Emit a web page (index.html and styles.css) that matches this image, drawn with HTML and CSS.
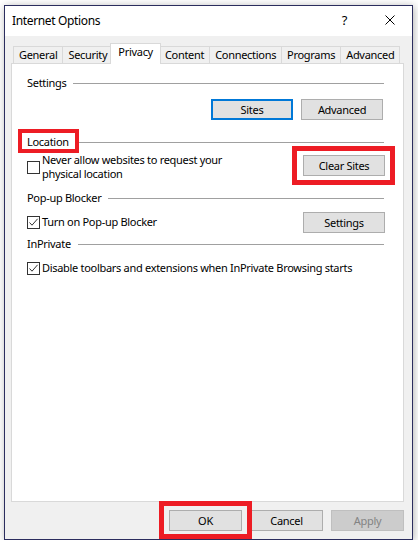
FILE: index.html
```html
<!DOCTYPE html>
<html lang="en">
<head>
<meta charset="utf-8">
<title>Internet Options</title>
<link rel="stylesheet" href="styles.css">
</head>
<body>
<div class="window">
  <header class="titlebar">
    <span class="title">Internet Options</span>
    <span class="caption-btn help">?</span>
    <span class="caption-btn close">
      <svg width="10" height="10" viewBox="0 0 10 10"><path d="M0.5 0.5L9.5 9.5M9.5 0.5L0.5 9.5" stroke="#000" stroke-width="1" fill="none"/></svg>
    </span>
  </header>

  <div class="dialog">
    <nav class="tabs">
      <span class="tab">General</span>
      <span class="tab">Security</span>
      <span class="tab active">Privacy</span>
      <span class="tab">Content</span>
      <span class="tab">Connections</span>
      <span class="tab">Programs</span>
      <span class="tab">Advanced</span>
    </nav>

    <section class="panel">
      <div class="group-head head-settings"><span>Settings</span><i class="rule"></i></div>
      <div class="btn-row">
        <button class="btn default">Sites</button>
        <button class="btn">Advanced</button>
      </div>

      <div class="group-head head-location"><span class="callout callout-label">Location</span><i class="rule"></i></div>
      <div class="option-row row-location">
        <label class="check multi">
          <span class="box"></span>
          <span class="check-text">Never allow websites to request your<br>physical location</span>
        </label>
        <button class="btn callout callout-btn">Clear Sites</button>
      </div>

      <div class="group-head head-popup"><span>Pop-up Blocker</span><i class="rule"></i></div>
      <div class="option-row row-popup">
        <label class="check single">
          <span class="box checked">
            <svg width="11" height="11" viewBox="0 0 11 11"><path d="M1.5 5.5L4 8.2L9.6 1.8" stroke="#333" stroke-width="1" fill="none"/></svg>
          </span>
          <span class="check-text">Turn on Pop-up Blocker</span>
        </label>
        <button class="btn">Settings</button>
      </div>

      <div class="group-head head-inprivate"><span>InPrivate</span><i class="rule"></i></div>
      <div class="option-row row-inprivate">
        <label class="check single">
          <span class="box checked">
            <svg width="11" height="11" viewBox="0 0 11 11"><path d="M1.5 5.5L4 8.2L9.6 1.8" stroke="#333" stroke-width="1" fill="none"/></svg>
          </span>
          <span class="check-text">Disable toolbars and extensions when InPrivate Browsing starts</span>
        </label>
      </div>
    </section>

    <footer class="actions">
      <button class="btn wide callout callout-ok">OK</button>
      <button class="btn wide">Cancel</button>
      <button class="btn wide" disabled>Apply</button>
    </footer>
  </div>
</div>
</body>
</html>
```

FILE: styles.css
```css
* {
  box-sizing: border-box;
}

html, body {
  margin: 0;
  background: #ffffff;
}

body {
  padding: 5px 0 0 4px;
  font-family: "Noto Sans", "Open Sans", sans-serif;
  font-size: 11px;
  letter-spacing: -0.3px;
  color: #000;
}

/* dialog frame */
.window {
  width: 409px;
  height: 535px;
  border: 1px solid #2b2d5e;
  display: flex;
  flex-direction: column;
  background: #f0f0f0;
  box-shadow: 1px 1px 8px rgba(0, 0, 0, 0.3);
}

.titlebar {
  height: 30px;
  flex: none;
  display: flex;
  align-items: center;
  background: #ffffff;
}

.title {
  flex: 1;
  padding-left: 7px;
  font-size: 12px;
  letter-spacing: -0.35px;
  line-height: 30px;
}

.caption-btn {
  width: 45px;
  height: 30px;
  display: flex;
  align-items: center;
  justify-content: center;
  padding-bottom: 2px;
}

.help {
  font-size: 13px;
  letter-spacing: 0;
}

.close svg {
  display: block;
}

.dialog {
  flex: 1;
  display: flex;
  flex-direction: column;
  padding: 7px 8px 8px 6px;
}

/* tab strip */
.tabs {
  height: 20px;
  flex: none;
  display: flex;
  align-items: flex-end;
  padding-left: 2px;
}

.tab {
  height: 17px;
  line-height: 15px;
  padding: 0 5px;
  border: 1px solid #d9d9d9;
  border-bottom: none;
  background: #f0f0f0;
  margin-left: -1px;
  white-space: nowrap;
}

.tab:first-child {
  margin-left: 0;
}

.tab.active {
  position: relative;
  z-index: 1;
  height: 21px;
  margin: 0 -2px -1px -3px;
  padding: 0 7px;
  background: #ffffff;
}

.tab.active + .tab {
  margin-left: 0;
}

/* tab page */
.panel {
  flex: 1;
  background: #ffffff;
  border: 1px solid #d9d9d9;
  padding: 12px 18px 0 15px;
}

.group-head {
  display: flex;
  align-items: center;
  height: 14px;
  line-height: 14px;
  white-space: nowrap;
}

.rule {
  flex: 1;
  height: 1px;
  background: #a0a0a0;
  margin-left: 7px;
  margin-right: 1px;
}

.head-location { margin-top: 15px; }
.head-popup { margin-top: 10px; }
.head-inprivate { margin-top: 4px; }

.btn-row {
  display: flex;
  justify-content: flex-end;
  gap: 8px;
  margin-top: 9px;
  padding-right: 2px;
}

.btn {
  width: 82px;
  height: 21px;
  padding: 0;
  margin: 0;
  font: inherit;
  letter-spacing: inherit;
  color: #000;
  background: #e1e1e1;
  border: 1px solid #adadad;
  border-radius: 0;
  line-height: 15px;
}

.btn.default {
  border: 2px solid #0078d7;
}

.btn:disabled {
  background: #cccccc;
  border-color: #bfbfbf;
  color: #838383;
}

.option-row {
  display: flex;
  justify-content: space-between;
  align-items: flex-start;
}

.row-location { margin-top: 4px; }
.row-location .btn { margin-top: 2px; }
.row-popup { margin-top: 7px; }
.row-inprivate { margin-top: 7px; }

.check {
  display: flex;
  align-items: center;
  line-height: 13px;
}

.check.multi {
  line-height: 14px;
}

.check.single {
  margin-top: 2px;
}

.check.single .box {
  margin-top: 2px;
}

.box {
  width: 13px;
  height: 13px;
  flex: none;
  border: 1px solid #333333;
  background: #ffffff;
  margin-right: 2px;
}

.box svg {
  display: block;
}

.check-text {
  white-space: nowrap;
}

/* bottom command buttons */
.actions {
  flex: none;
  display: flex;
  justify-content: flex-end;
  gap: 8px;
  margin-top: 8px;
}

.btn.wide {
  width: 73px;
}

/* red highlight frames */
.callout {
  position: relative;
}

.callout::after {
  content: "";
  position: absolute;
  border: 5px solid #ed1c24;
  pointer-events: none;
}

.callout-label::after {
  border-width: 4px;
  top: -6px;
  bottom: -4px;
  left: -9px;
  right: -10px;
}

.callout-btn::after {
  top: -10px;
  bottom: -10px;
  left: -12px;
  right: -11px;
}

.callout-ok::after {
  top: -10px;
  bottom: -9px;
  left: -11px;
  right: -11px;
}
```
